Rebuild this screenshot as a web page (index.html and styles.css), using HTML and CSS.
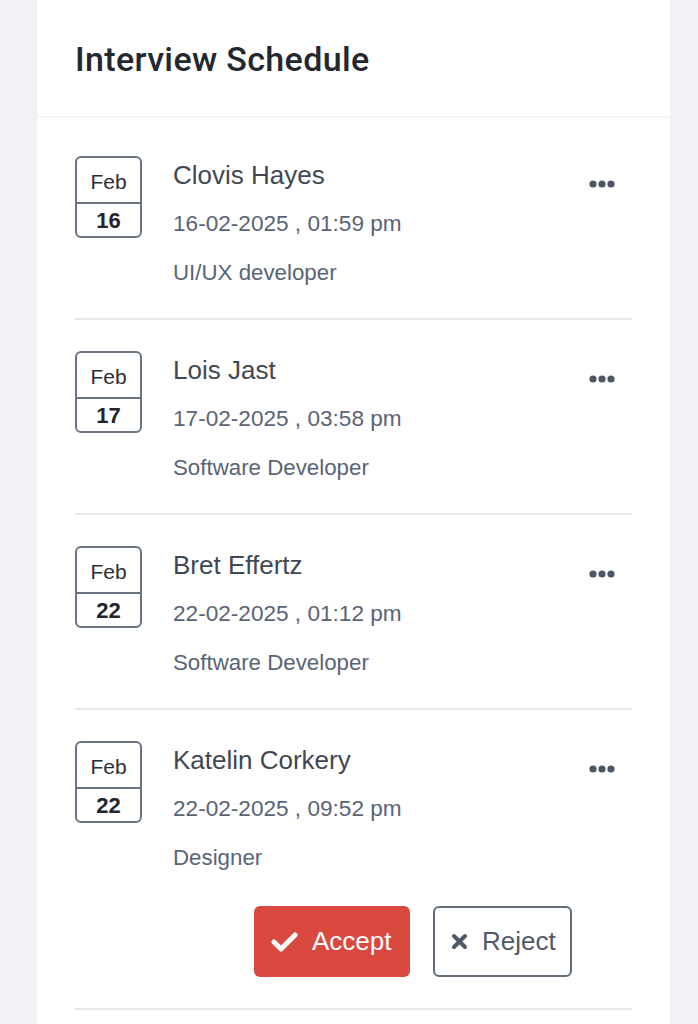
FILE: index.html
```html
<!DOCTYPE html>
<html>
<head>
<meta charset="utf-8">
<link rel="stylesheet" href="styles.css">
</head>
<body>
<div class="card">
  <div class="card-header"><h1 class="title">Interview Schedule</h1></div>
  <div class="list">
    <div class="item">
      <div class="datebox"><div class="month">Feb</div><div class="day">16</div></div>
      <div class="info">
        <div class="name">Clovis Hayes</div>
        <div class="when">16-02-2025 , 01:59 pm</div>
        <div class="role">UI/UX developer</div>
      </div>
      <div class="more"><svg width="26" height="8" viewBox="0 0 26 8"><circle cx="4" cy="4" r="3.6"/><circle cx="13" cy="4" r="3.6"/><circle cx="22" cy="4" r="3.6"/></svg></div>
    </div>
    <div class="item">
      <div class="datebox"><div class="month">Feb</div><div class="day">17</div></div>
      <div class="info">
        <div class="name">Lois Jast</div>
        <div class="when">17-02-2025 , 03:58 pm</div>
        <div class="role">Software Developer</div>
      </div>
      <div class="more"><svg width="26" height="8" viewBox="0 0 26 8"><circle cx="4" cy="4" r="3.6"/><circle cx="13" cy="4" r="3.6"/><circle cx="22" cy="4" r="3.6"/></svg></div>
    </div>
    <div class="item">
      <div class="datebox"><div class="month">Feb</div><div class="day">22</div></div>
      <div class="info">
        <div class="name">Bret Effertz</div>
        <div class="when">22-02-2025 , 01:12 pm</div>
        <div class="role">Software Developer</div>
      </div>
      <div class="more"><svg width="26" height="8" viewBox="0 0 26 8"><circle cx="4" cy="4" r="3.6"/><circle cx="13" cy="4" r="3.6"/><circle cx="22" cy="4" r="3.6"/></svg></div>
    </div>
    <div class="item item-last">
      <div class="datebox"><div class="month">Feb</div><div class="day">22</div></div>
      <div class="info">
        <div class="name">Katelin Corkery</div>
        <div class="when">22-02-2025 , 09:52 pm</div>
        <div class="role">Designer</div>
        <div class="actions">
          <button class="btn btn-accept"><svg width="27" height="21" viewBox="0 0 27 21"><path d="M3 11 L10 18 L24 4" fill="none" stroke="#fff" stroke-width="5" stroke-linecap="round" stroke-linejoin="round"/></svg><span>Accept</span></button>
          <button class="btn btn-reject"><svg width="17" height="17" viewBox="0 0 17 17"><path d="M3 3 L14 14 M14 3 L3 14" fill="none" stroke="#4f5967" stroke-width="4" stroke-linecap="round"/></svg><span>Reject</span></button>
        </div>
      </div>
      <div class="more"><svg width="26" height="8" viewBox="0 0 26 8"><circle cx="4" cy="4" r="3.6"/><circle cx="13" cy="4" r="3.6"/><circle cx="22" cy="4" r="3.6"/></svg></div>
    </div>
  </div>
</div>
</body>
</html>
```
FILE: styles.css
```css
html, body {
  margin: 0;
  padding: 0;
  background: #f0f2f6;
  font-family: "Liberation Sans", Arial, sans-serif;
}
.card {
  width: 633px;
  margin-left: 37px;
  background: #fff;
  min-height: 1024px;
}
.card-header {
  height: 116px;
  padding-left: 38px;
  display: flex;
  align-items: center;
  border-bottom: 1px solid #f0f1f4;
  box-shadow: 0 1px 3px rgba(0,0,0,0.03);
}
.title {
  margin: 0;
  font-family: Roboto, "Liberation Sans", sans-serif;
  font-size: 34px;
  font-weight: 500;
  color: #23272f;
  letter-spacing: 0.35px;
  padding-top: 2px;
}
.list {
  padding: 7px 38px 0 38px;
}
.item {
  display: flex;
  align-items: flex-start;
  padding: 32px 0 30px 0;
  border-bottom: 2px solid #e8e8e9;
}
.item + .item {
  padding-top: 31px;
}
.item-last {
  padding-bottom: 31px;
}
.datebox {
  width: 63px;
  height: 78px;
  border: 2px solid #6b7482;
  border-radius: 6px;
  display: flex;
  flex-direction: column;
  flex-shrink: 0;
}
.month {
  height: 46px;
  border-bottom: 2px solid #6b7482;
  display: flex;
  align-items: center;
  justify-content: center;
  font-size: 21px;
  color: #2b2f36;
  padding-top: 3px;
  box-sizing: border-box;
}
.day {
  flex: 1;
  display: flex;
  align-items: center;
  justify-content: center;
  font-size: 22px;
  font-weight: 700;
  color: #22262c;
  padding-top: 1px;
}
.info {
  flex: 1;
  margin-left: 31px;
  padding-top: 4px;
}
.name {
  font-size: 26px;
  line-height: 30px;
  color: #414853;
  margin-bottom: 19px;
}
.when {
  font-size: 22.6px;
  line-height: 30px;
  color: #5a6475;
  margin-bottom: 19px;
}
.role {
  font-size: 22.3px;
  line-height: 30px;
  color: #5a6475;
}
.more {
  width: 26px;
  margin-right: 17px;
  padding-top: 24px;
}
.more svg {
  display: block;
  fill: #4d5665;
}
.actions {
  display: flex;
  gap: 23px;
  margin-top: 33px;
  margin-left: 81px;
}
.btn {
  height: 71px;
  border-radius: 6px;
  display: flex;
  align-items: center;
  font-family: "Liberation Sans", Arial, sans-serif;
  font-size: 26px;
  padding: 0 10px 0 17px;
  cursor: pointer;
}
.btn svg {
  display: block;
  margin-right: 14px;
}
.btn-accept {
  background: #d9493f;
  border: none;
  color: #fff;
  width: 156px;
}
.btn-reject {
  background: #fff;
  border: 2px solid #626c7a;
  color: #4f5967;
  width: 139px;
  padding-left: 16px;
}
```
